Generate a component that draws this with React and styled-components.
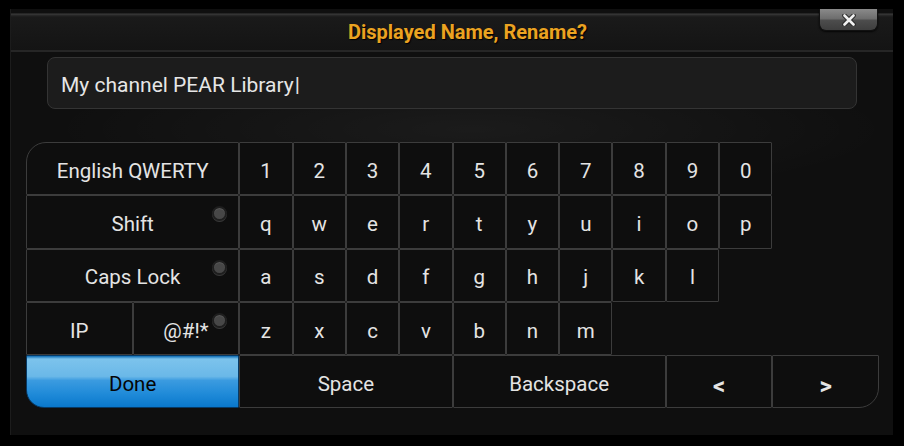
import React from "react";
import styled, { createGlobalStyle } from "styled-components";

const GlobalStyle = createGlobalStyle`
  html, body {
    margin: 0;
    padding: 0;
    background: #000;
    font-family: Roboto, "Liberation Sans", sans-serif;
  }
`;

const rows = [
  [
    { label: "English QWERTY", span: 4, corner: "tl" },
    ..."1234567890".split("").map((c) => ({ label: c })),
  ],
  [
    { label: "Shift", span: 4, dot: true },
    ..."qwertyuiop".split("").map((c) => ({ label: c })),
  ],
  [
    { label: "Caps Lock", span: 4, dot: true },
    ..."asdfghjkl".split("").map((c) => ({ label: c })),
  ],
  [
    { label: "IP", span: 2 },
    { label: "@#!*", span: 2, dot: true },
    ..."zxcvbnm".split("").map((c) => ({ label: c })),
  ],
  [
    { label: "Done", span: 4, primary: true, corner: "bl" },
    { label: "Space", span: 4 },
    { label: "Backspace", span: 4 },
    { label: "<", span: 2, bold: true },
    { label: ">", span: 2, bold: true, corner: "br" },
  ],
];

const App = () => {
  return (
    <>
      <GlobalStyle />
      <Dialog>
        <TitleBar>
          <Title>Displayed Name, Rename?</Title>
          <CloseButton>
            <svg width="16" height="12" viewBox="0 0 16 12">
              <path
                d="M3.5 1.5 L12.5 10.5 M12.5 1.5 L3.5 10.5"
                stroke="#2a2a2a"
                strokeWidth="4.6"
                strokeLinecap="round"
              />
              <path
                d="M3.5 1.5 L12.5 10.5 M12.5 1.5 L3.5 10.5"
                stroke="#f0f0f0"
                strokeWidth="2.6"
                strokeLinecap="round"
              />
            </svg>
          </CloseButton>
        </TitleBar>
        <InputBox>
          My channel PEAR Library<Caret>|</Caret>
        </InputBox>
        <Keyboard>
          {rows.map((row, r) =>
            row.map((key, i) => (
              <Key
                key={`${r}-${i}`}
                $row={r + 1}
                $span={key.span || 1}
                $primary={key.primary}
                $corner={key.corner}
                $bold={key.bold}
              >
                {key.label}
                {key.dot && <Dot />}
              </Key>
            ))
          )}
        </Keyboard>
      </Dialog>
    </>
  );
};

const Dialog = styled.div`
  position: relative;
  box-sizing: border-box;
  width: 883px;
  height: 426px;
  margin: 9px 0 0 10px;
  background: radial-gradient(
      ellipse 420px 70px at 460px 120px,
      rgba(255, 255, 255, 0.05),
      rgba(255, 255, 255, 0) 100%
    ),
    #0f0f0f;
  border-left: 1px solid #1c1c1c;
  display: flex;
  flex-direction: column;
`;

const TitleBar = styled.div`
  height: 43px;
  display: flex;
  align-items: flex-start;
  box-sizing: border-box;
  border-bottom: 2px solid #262626;
  background: linear-gradient(
    to bottom,
    #0f0f0f 0px,
    #0f0f0f 4px,
    #3c3c3c 5px,
    #2a2a2a 6px,
    #1a1a1a 8px,
    #141414 100%
  );
`;

const Title = styled.div`
  flex: 1;
  padding: 11px 0 0 337px;
  font-size: 20px;
  font-weight: 700;
  color: #eba321;
  text-shadow: 1px 1px 1px #000;
`;

const CloseButton = styled.div`
  width: 59px;
  height: 22px;
  margin-right: 15px;
  box-sizing: border-box;
  border: 1px solid #111;
  border-top: none;
  border-radius: 0 0 7px 7px;
  background: linear-gradient(
    to bottom,
    #8a8a8a 0%,
    #6e6e6e 45%,
    #4c4c4c 55%,
    #3e3e3e 100%
  );
  display: flex;
  align-items: center;
  justify-content: center;
  box-shadow: 0 1px 2px rgba(0, 0, 0, 0.8);
`;

const InputBox = styled.div`
  margin: 5px 36px 0 36px;
  height: 52px;
  box-sizing: border-box;
  border: 1px solid #343434;
  border-radius: 8px;
  background: #1c1c1c;
  padding: 4px 13px 0;
  display: flex;
  align-items: center;
  font-size: 21px;
  color: #e6e6e6;
`;

const Caret = styled.span`
  margin-left: 1px;
`;

const Keyboard = styled.div`
  margin: 33px 0 0 15px;
  width: 853px;
  display: grid;
  grid-template-columns: repeat(16, 1fr);
  grid-template-rows: repeat(5, 53.3px);
`;

const radius = {
  tl: "20px 1px 1px 1px",
  bl: "1px 1px 1px 18px",
  br: "1px 1px 20px 1px",
};

const Key = styled.div`
  position: relative;
  grid-row: ${(p) => p.$row};
  grid-column: span ${(p) => p.$span};
  box-sizing: border-box;
  border: 1px solid ${(p) => (p.$primary ? "#063a66" : "#3c3c3c")};
  border-radius: ${(p) => (p.$corner ? radius[p.$corner] : "1px")};
  background: ${(p) =>
    p.$primary
      ? "linear-gradient(to bottom, #0d6cb4 0px, #7cc3ec 3px, #6ab8e8 40%, #3b9be0 48%, #1f8ad8 75%, #0a78cc 100%)"
      : "#0e0e0e"};
  color: ${(p) => (p.$primary ? "#050505" : "#e4e4e4")};
  font-size: ${(p) => (p.$bold ? "24px" : "20.5px")};
  font-weight: ${(p) => (p.$bold ? 700 : 400)};
  display: flex;
  align-items: center;
  justify-content: center;
  padding-top: ${(p) => (p.$bold ? "8px" : "4px")};
`;

const Dot = styled.span`
  position: absolute;
  top: 10px;
  right: 11px;
  width: 11px;
  height: 11px;
  border-radius: 50%;
  background: #474747;
  border: 2px solid #1e1e1e;
  box-shadow: 0 1px 0 #3a3a3a, inset 0 1px 1px rgba(255, 255, 255, 0.1);
`;

export default App;
